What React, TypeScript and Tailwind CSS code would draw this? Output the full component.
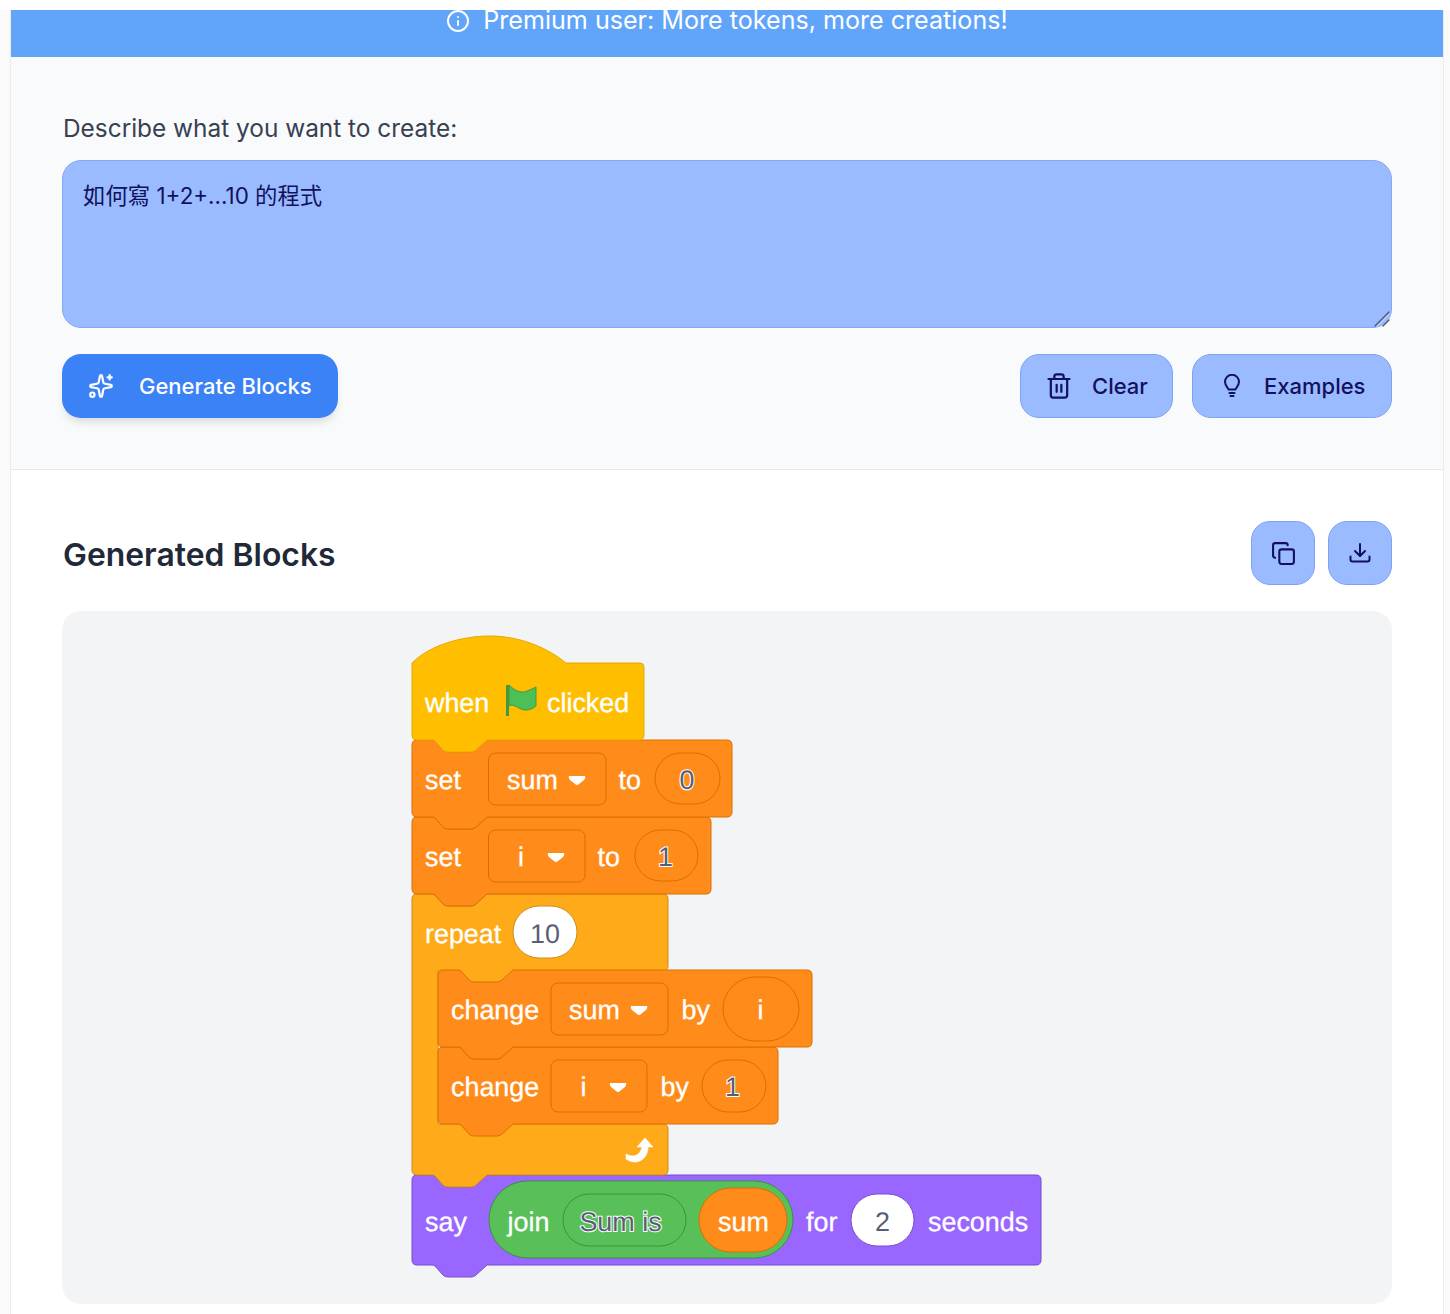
import { Copy, Info, Sparkles, Trash2 } from "lucide-react"

const ink = "#12115e"

// notch runs along a horizontal edge, x is the block's left side
function notchRtl(x: number, y: number) {
  return `L${x + 75},${y} L${x + 64},${y + 10} Q${x + 62},${y + 12} ${x + 59},${y + 12} L${x + 36},${y + 12} Q${x + 33},${y + 12} ${x + 31},${y + 10} L${x + 23},${y + 1} Q${x + 22},${y} ${x + 20},${y}`
}

function notchLtr(x: number, y: number) {
  return `L${x + 20},${y} Q${x + 22},${y} ${x + 23},${y + 1} L${x + 31},${y + 10} Q${x + 33},${y + 12} ${x + 36},${y + 12} L${x + 59},${y + 12} Q${x + 62},${y + 12} ${x + 64},${y + 10} L${x + 75},${y}`
}

function stackPath(x: number, y: number, r: number, b: number) {
  return `M${x},${y + 5} Q${x},${y} ${x + 5},${y} ${notchLtr(x, y)} L${r - 5},${y} Q${r},${y} ${r},${y + 5} L${r},${b - 5} Q${r},${b} ${r - 5},${b} ${notchRtl(x, b)} L${x + 5},${b} Q${x},${b} ${x},${b - 5} Z`
}

const hatPath = `M412,663 C430,645 462,636 490,636 C520,636 548,648 566,663 L640,663 Q644,663 644,667 L644,735 Q644,740 639,740 ${notchRtl(412, 740)} L417,740 Q412,740 412,735 Z`

const repeatPath = `M412,899 Q412,894 417,894 ${notchLtr(412, 894)} L663,894 Q668,894 668,899 L668,966 Q668,971 663,971 ${notchRtl(438, 971)} L438,971 L438,1124 L663,1124 Q668,1124 668,1129 L668,1170 Q668,1175 663,1175 ${notchRtl(412, 1175)} L417,1175 Q412,1175 412,1170 Z`

function Label({ x, y, children }: { x: number; y: number; children: string }) {
  return (
    <text x={x} y={y} dy={0.7} fill="#fff" stroke="#fff" strokeWidth={0.3} fontSize={26.9} textRendering="geometricPrecision" fontFamily="'Liberation Sans', Arial, sans-serif">
      {children}
    </text>
  )
}

function Value({ x, y, outlined, children }: { x: number; y: number; outlined?: boolean; children: string }) {
  return (
    <text
      x={x}
      y={y}
      dy={0.7}
      textAnchor="middle"
      fill="#575e75"
      stroke={outlined ? "#fff" : "none"}
      strokeWidth={outlined ? 2 : 0}
      paintOrder="stroke"
      fontSize={26.9}
      textRendering="geometricPrecision"
      fontFamily="'Liberation Sans', Arial, sans-serif"
    >
      {children}
    </text>
  )
}

function Dropdown({ x, y, r, caret }: { x: number; y: number; r: number; caret: number }) {
  return (
    <>
      <rect x={x} y={y} width={r - x} height={52} rx={7} fill="#ff8c1a" stroke="#db6e00" />
      <path d={`M${caret},${y + 23} L${caret + 16},${y + 23} Q${caret + 17},${y + 25} ${caret + 15},${y + 27} L${caret + 10},${y + 31} Q${caret + 8},${y + 33} ${caret + 6},${y + 31} L${caret + 1},${y + 27} Q${caret - 1},${y + 25} ${caret},${y + 23} Z`} fill="#fff" />
    </>
  )
}

function Pill({ x, y, r, b, fill, stroke }: { x: number; y: number; r: number; b: number; fill: string; stroke: string }) {
  return <rect x={x} y={y} width={r - x} height={b - y} rx={(b - y) / 2} fill={fill} stroke={stroke} />
}

function ScratchBlocks() {
  return (
    <svg width={660} height={655} viewBox="400 630 660 655">
      {/* drawn bottom up so each tab lies over the block under it */}
      <path d={stackPath(412, 1175, 1041, 1265)} fill="#9966ff" stroke="#774dcb" />
      <Label x={425} y={1230}>say</Label>
      <Pill x={489} y={1181} r={793} b={1258} fill="#59c059" stroke="#389438" />
      <Label x={507.5} y={1230}>join</Label>
      <Pill x={563} y={1194} r={686} b={1246} fill="#59c059" stroke="#389438" />
      <Value x={620.5} y={1230} outlined>Sum is</Value>
      <Pill x={699} y={1188} r={787} b={1252} fill="#ff8c1a" stroke="#db6e00" />
      <Label x={718} y={1230}>sum</Label>
      <Label x={806} y={1230}>for</Label>
      <Pill x={851} y={1194} r={914} b={1246} fill="#fff" stroke="#774dcb" />
      <Value x={882.5} y={1230}>2</Value>
      <Label x={928} y={1230}>seconds</Label>

      <path d={repeatPath} fill="#ffab19" stroke="#cf8b17" />
      <Label x={425} y={942}>repeat</Label>
      <Pill x={513} y={906} r={577} b={958} fill="#fff" stroke="#cf8b17" />
      <Value x={545} y={942}>10</Value>
      <path d="M626,1154 C633,1158 640,1156 642,1147 L637,1147 L645,1138 L653,1147 L648,1147 C648,1160 636,1166 626,1159 Z" fill="#fff" stroke="#fff" strokeWidth={0.6} strokeLinejoin="round" />

      <path d={stackPath(438, 1047, 778, 1124)} fill="#ff8c1a" stroke="#db6e00" />
      <Label x={451} y={1095}>change</Label>
      <Dropdown x={551} y={1060} r={647} caret={610} />
      <Label x={580.5} y={1095}>i</Label>
      <Label x={660.5} y={1095}>by</Label>
      <Pill x={702} y={1060} r={766} b={1112} fill="#ff8c1a" stroke="#db6e00" />
      <Value x={732.5} y={1095} outlined>1</Value>

      <path d={stackPath(438, 970, 812, 1047)} fill="#ff8c1a" stroke="#db6e00" />
      <Label x={451} y={1018}>change</Label>
      <Dropdown x={551} y={983} r={668} caret={631} />
      <Label x={569} y={1018}>sum</Label>
      <Label x={681.5} y={1018}>by</Label>
      <Pill x={723} y={977} r={799} b={1041} fill="#ff8c1a" stroke="#db6e00" />
      <Label x={757.5} y={1018}>i</Label>

      <path d={stackPath(412, 817, 711, 894)} fill="#ff8c1a" stroke="#db6e00" />
      <Label x={425} y={865}>set</Label>
      <Dropdown x={488.5} y={830} r={585} caret={548} />
      <Label x={518} y={865}>i</Label>
      <Label x={597.5} y={865}>to</Label>
      <Pill x={635} y={830} r={698} b={881} fill="#ff8c1a" stroke="#db6e00" />
      <Value x={665.5} y={865} outlined>1</Value>

      <path d={stackPath(412, 740, 732, 817)} fill="#ff8c1a" stroke="#db6e00" />
      <Label x={425} y={788}>set</Label>
      <Dropdown x={488.5} y={753} r={606} caret={569} />
      <Label x={507} y={788}>sum</Label>
      <Label x={618.5} y={788}>to</Label>
      <Pill x={655} y={753} r={720} b={804} fill="#ff8c1a" stroke="#db6e00" />
      <Value x={687} y={788} outlined>0</Value>

      <path d={hatPath} fill="#ffbf00" stroke="#e6a800" />
      <Label x={425} y={711}>when</Label>
      <path d="M506,685 L509,685 L509,716 L506,716 Z" fill="#45993d" />
      <path d="M509,685 C514,690 521,694 527,691 C530,690 534,688 536,687 L536,706 C530,711 524,711 519,708 C515,706 512,704 509,706 Z" fill="#4cbf56" stroke="#45993d" strokeWidth={1} />
      <Label x={547} y={711}>clicked</Label>
    </svg>
  )
}

function Lightbulb() {
  return (
    <svg width={24} height={24} viewBox="0 0 24 24" fill="none" stroke="currentColor" strokeWidth={2} strokeLinecap="round" strokeLinejoin="round">
      <path d="M8.5 15.5c0-1.6-3.5-3.2-3.5-7.7a7 7 0 0 1 14 0c0 4.5-3.5 6.1-3.5 7.7Z" />
      <path d="M9.5 19h5" />
      <path d="M10.5 22h3" />
    </svg>
  )
}

function DownloadTray() {
  return (
    <svg width={24} height={24} viewBox="0 0 24 24" fill="none" stroke="currentColor" strokeWidth={2} strokeLinecap="round" strokeLinejoin="round">
      <path d="M12 3v12" />
      <path d="m7 10 5 5 5-5" />
      <path d="M2.5 15.5v3a2 2 0 0 0 2 2h15a2 2 0 0 0 2-2v-3" />
    </svg>
  )
}

const softButton =
  "flex h-16 items-center rounded-[19px] border border-[#7ea3f2] bg-[#9abbff] text-[22px] font-medium text-[#12115e]"

export default function App() {
  return (
    <div className="flex h-[1314px] overflow-hidden bg-white pt-[10px] font-['Inter',sans-serif]">
      <div className="w-[11px] shrink-0 border-r border-[#ececec] bg-[#fafafa]" />

      <main className="w-[1432px] shrink-0">
        <div className="flex h-[47px] justify-center overflow-hidden bg-[#60a5fa] text-white">
          <div className="-mt-[8px] flex h-[38px] items-center gap-[13px] text-[25.1px]">
            <Info size={24} strokeWidth={2} />
            <span>Premium user: More tokens, more creations!</span>
          </div>
        </div>

        <section className="border-b border-[#e5e7eb] bg-[#f9fafb] px-[51px] pb-[51px] pt-[52px]">
          <label className="mb-[13px] ml-px block text-[24.4px] leading-[38px] text-[#374151]">
            Describe what you want to create:
          </label>
          <div className="relative">
            <textarea
              readOnly
              value="如何寫 1+2+...10 的程式"
              className="block h-[168px] w-full resize-none rounded-[19px] border border-[#86a8f5] bg-[#9abbff] px-5 pb-[16px] pt-[17px] font-['Inter','Noto_Sans_CJK_TC',sans-serif] text-[22.4px] leading-[36px] outline-none"
              style={{ color: ink }}
            />
            <svg width={18} height={18} viewBox="0 0 18 18" className="absolute bottom-0 right-[1px]" fill="none" strokeLinecap="round">
              <path d="M2 16 L16 2" stroke="#4b5563" strokeWidth={1.2} />
              <path d="M10 16 L16 10" stroke="#4b5563" strokeWidth={1.2} />
              <path d="M4 16.5 L16.5 4" stroke="#dbe6ff" strokeWidth={0.8} />
            </svg>
          </div>
          <div className="mt-[26px] flex items-center justify-between">
            <button className="flex h-16 w-[276px] items-center gap-[25px] rounded-[19px] bg-[#3b82f6] pl-[26px] text-[22px] font-medium text-white shadow-[0_6px_10px_-3px_rgba(0,0,0,0.15)]">
              <Sparkles size={26} strokeWidth={2} />
              Generate Blocks
            </button>
            <div className="flex gap-[19px]">
              <button className={`${softButton} w-[153px] gap-[19px] pl-[24px]`}>
                <Trash2 size={28} strokeWidth={1.9} />
                Clear
              </button>
              <button className={`${softButton} w-[200px] gap-[20px] pl-[27px]`}>
                <Lightbulb />
                Examples
              </button>
            </div>
          </div>
        </section>

        <section className="bg-white px-[51px] pt-[51px]">
          <div className="flex items-center justify-between">
            <h2 className="ml-px mt-[3px] text-[31.9px] font-semibold leading-[48px] text-[#1f2937]">Generated Blocks</h2>
            <div className="flex gap-[13px]">
              <button className={`${softButton} w-16 justify-center`}>
                <Copy size={25} strokeWidth={2} />
              </button>
              <button className={`${softButton} w-16 justify-center`}>
                <DownloadTray />
              </button>
            </div>
          </div>
          <div className="mt-[26px] h-[693px] rounded-[19px] bg-[#f3f4f6] pl-[338px] pt-[19px]">
            <ScratchBlocks />
          </div>
        </section>
      </main>

      <div className="flex-1 border-l border-[#ececec] bg-[#fafafa]" />
    </div>
  )
}
